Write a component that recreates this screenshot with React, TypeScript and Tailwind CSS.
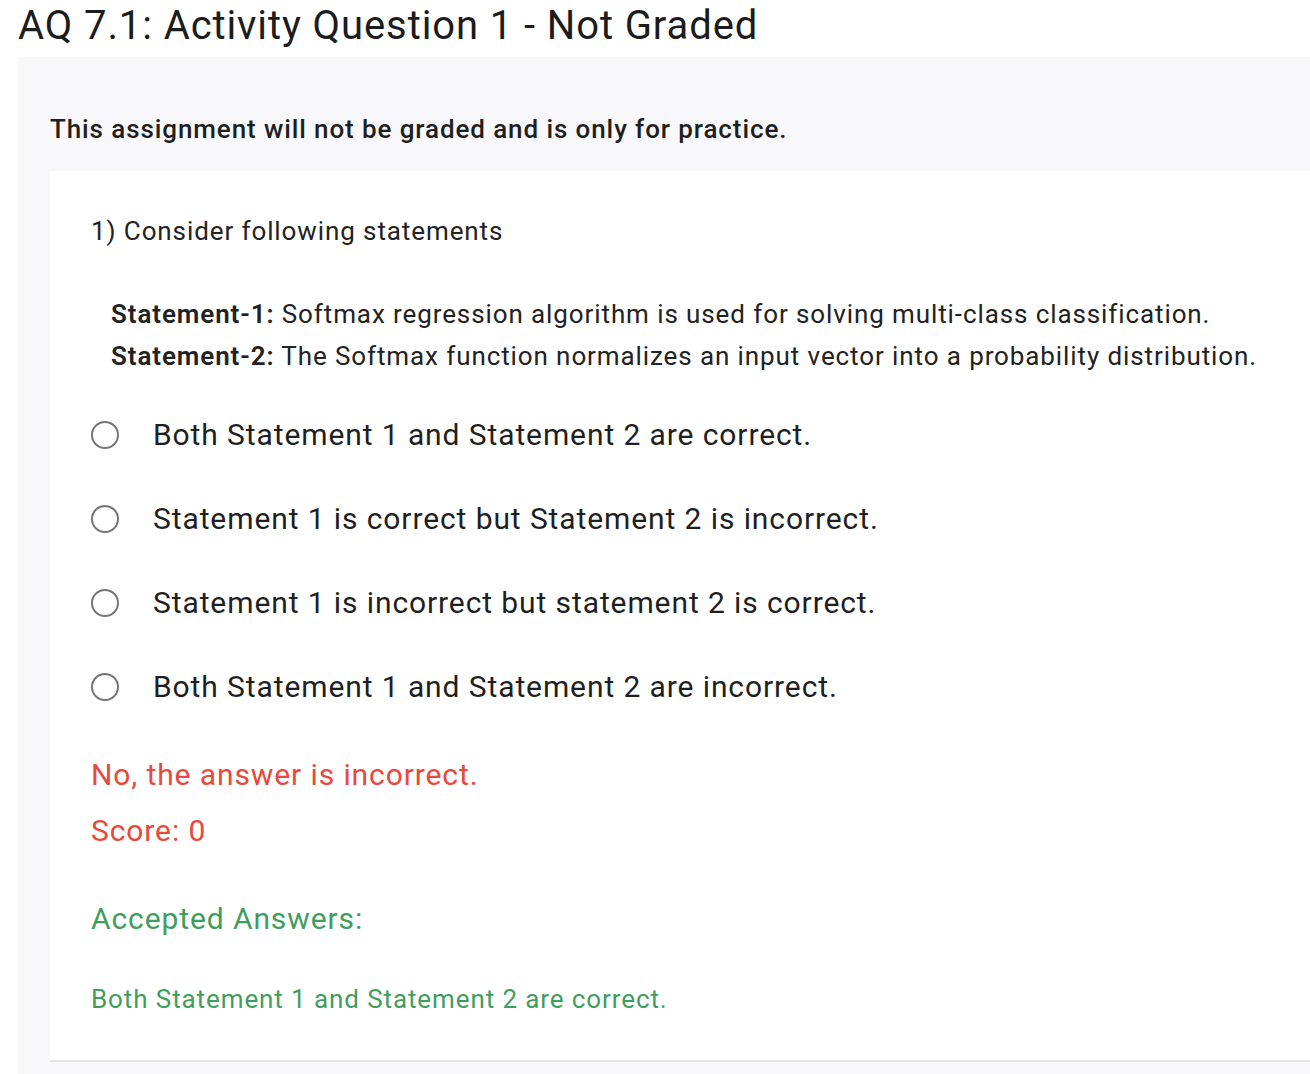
import React from 'react';

const OPTIONS = [
  'Both Statement 1 and Statement 2 are correct.',
  'Statement 1 is correct but Statement 2 is incorrect.',
  'Statement 1 is incorrect but statement 2 is correct.',
  'Both Statement 1 and Statement 2 are incorrect.',
];

const App = () => {
  return (
    <div className="min-h-screen bg-white font-['Roboto',sans-serif] tracking-[0.9px] text-[#222]">
      {/* Title */}
      <h1 className="pl-[18px] pt-[2px] text-[40px] leading-[48px] text-[#1c1c1c]">
        AQ 7.1: Activity Question 1 - Not Graded
      </h1>

      {/* Assignment panel */}
      <div className="ml-[18px] mt-[7px] bg-[#f8f8fa] pl-[32px] pt-[54px] pb-[14px]">
        <p className="text-[26px] font-medium leading-[36px] text-[#1f1f1f]">
          This assignment will not be graded and is only for practice.
        </p>

        {/* Question card */}
        <div className="mt-[24px] bg-white pl-[41px] pt-[40px] pb-[41px] border-b-2 border-[#e4e4e6]">
          <p className="text-[26px] leading-[40px]">1) Consider following statements</p>

          <div className="mt-[42px] pl-[20px] text-[26px] leading-[42px]">
            <p>
              <span className="font-semibold">Statement-1:</span> Softmax regression algorithm is used for solving
              multi-class classification.
            </p>
            <p>
              <span className="font-semibold">Statement-2:</span> The Softmax function normalizes an input vector into
              a probability distribution.
            </p>
          </div>

          {/* Options */}
          <div className="mt-[16px] flex flex-col">
            {OPTIONS.map((opt) => (
              <label key={opt} className="flex h-[84px] items-center gap-[34px]">
                <span className="h-[28px] w-[28px] shrink-0 rounded-full border-2 border-[#767676] bg-white" />
                <span className="text-[30px] leading-[40px] text-[#1f1f1f]">{opt}</span>
              </label>
            ))}
          </div>

          {/* Feedback */}
          <div className="mt-[26px] text-[30px] leading-[40px] text-[#e8493c]">
            <p>No, the answer is incorrect.</p>
            <p className="mt-[16px]">Score: 0</p>
          </div>

          <p className="mt-[48px] text-[30px] leading-[40px] text-[#3f9e5e]">Accepted Answers:</p>
          <p className="mt-[40px] text-[26px] leading-[40px] text-[#3f9e5e]">
            Both Statement 1 and Statement 2 are correct.
          </p>
        </div>
      </div>
    </div>
  );
};

export default App;
